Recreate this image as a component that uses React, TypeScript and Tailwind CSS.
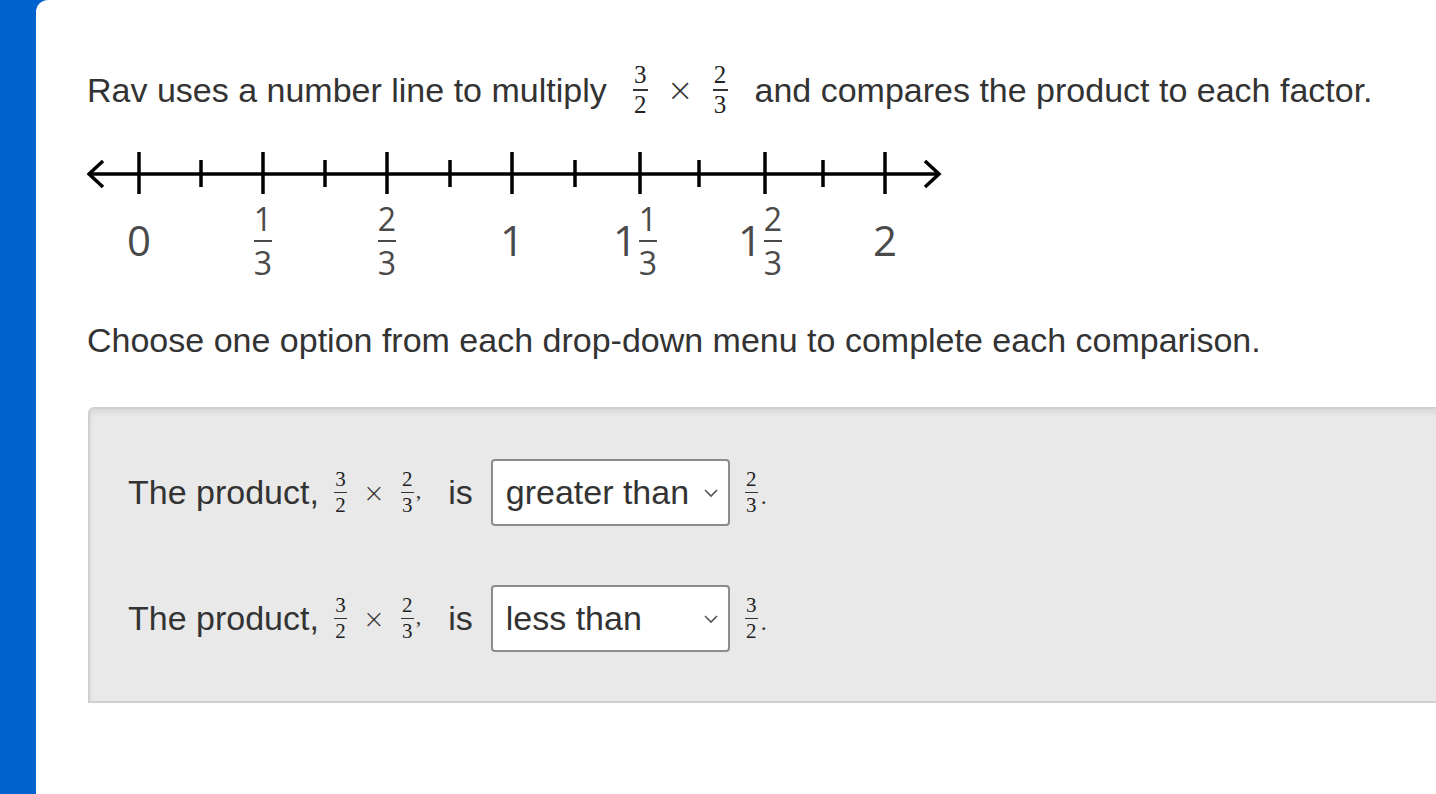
import React from 'react';

function Frac({ n, d, size = 'text-[25px]', bar = 'w-[15px]' }: { n: string; d: string; size?: string; bar?: string }) {
  return (
    <span className={`inline-flex flex-col items-center align-middle leading-none font-['Liberation_Serif',serif] text-[#222] ${size}`}>
      <span className="leading-[0.9]">{n}</span>
      <span className={`h-[1.5px] bg-[#333] my-[3px] ${bar}`} />
      <span className="leading-[0.9]">{d}</span>
    </span>
  );
}

function Times({ size = 'text-[32px]' }: { size?: string }) {
  return <span className={`font-['DejaVu_Sans',sans-serif] font-light text-[#333] ${size} leading-none`}>×</span>;
}

function Chevron() {
  return (
    <svg width="16" height="10" viewBox="0 0 16 10" fill="none">
      <path d="M2 2 L8 8 L14 2" stroke="#555" strokeWidth="1.6" />
    </svg>
  );
}

function Dropdown({ value }: { value: string }) {
  return (
    <div className="w-[239px] h-[67px] bg-white border-2 border-[#8c8c8c] rounded-[4px] flex items-center justify-between pl-[13px] pr-[9px] text-[34px] text-[#333]">
      <span>{value}</span>
      <Chevron />
    </div>
  );
}

function NumberLine() {
  const major = [52, 176, 300, 425, 553, 678, 798];
  const minor = [114, 238, 363, 488, 612, 736];
  const label = "font-['Open_Sans',sans-serif]";
  return (
    <svg width="860" height="140" viewBox="0 0 860 140" className="block">
      <line x1="2" y1="29" x2="852" y2="29" stroke="#000" strokeWidth="3.5" />
      <path d="M16 16 L2 29 L16 42" stroke="#000" strokeWidth="3.5" fill="none" />
      <path d="M838 16 L852 29 L838 42" stroke="#000" strokeWidth="3.5" fill="none" />
      {major.map((x) => (
        <line key={x} x1={x} y1="7" x2={x} y2="49" stroke="#000" strokeWidth="3.5" />
      ))}
      {minor.map((x) => (
        <line key={x} x1={x} y1="15" x2={x} y2="42" stroke="#000" strokeWidth="3.5" />
      ))}
      <g className={label} fill="#4a4a4a">
        <text x="52" y="111" fontSize="42" textAnchor="middle">0</text>
        <text x="425" y="111" fontSize="42" textAnchor="middle">1</text>
        <text x="798" y="111" fontSize="42" textAnchor="middle">2</text>
        {/* 1/3 */}
        <text x="176" y="86" fontSize="32" textAnchor="middle">1</text>
        <line x1="167" y1="96" x2="185" y2="96" stroke="#4a4a4a" strokeWidth="2" />
        <text x="176" y="130" fontSize="32" textAnchor="middle">3</text>
        {/* 2/3 */}
        <text x="300" y="86" fontSize="32" textAnchor="middle">2</text>
        <line x1="291" y1="96" x2="309" y2="96" stroke="#4a4a4a" strokeWidth="2" />
        <text x="300" y="130" fontSize="32" textAnchor="middle">3</text>
        {/* 1 1/3 */}
        <text x="538" y="111" fontSize="42" textAnchor="middle">1</text>
        <text x="561" y="86" fontSize="32" textAnchor="middle">1</text>
        <line x1="552" y1="96" x2="570" y2="96" stroke="#4a4a4a" strokeWidth="2" />
        <text x="561" y="130" fontSize="32" textAnchor="middle">3</text>
        {/* 1 2/3 */}
        <text x="663" y="111" fontSize="42" textAnchor="middle">1</text>
        <text x="686" y="86" fontSize="32" textAnchor="middle">2</text>
        <line x1="677" y1="96" x2="695" y2="96" stroke="#4a4a4a" strokeWidth="2" />
        <text x="686" y="130" fontSize="32" textAnchor="middle">3</text>
      </g>
    </svg>
  );
}

function Row({ value, n, d }: { value: string; n: string; d: string }) {
  return (
    <div className="flex items-center text-[34px] text-[#333]">
      <span>The product,</span>
      <span className="ml-[15px] inline-flex items-center gap-[16px]">
        <Frac n="3" d="2" size="text-[21px]" bar="w-[13px]" />
        <Times size="text-[26px]" />
        <span className="inline-flex items-center">
          <Frac n="2" d="3" size="text-[21px]" bar="w-[13px]" />
          <span className="font-['Liberation_Serif',serif] text-[22px] self-end mb-[8px] ml-[2px]">,</span>
        </span>
      </span>
      <span className="ml-[27px]">is</span>
      <div className="ml-[18px]">
        <Dropdown value={value} />
      </div>
      <span className="ml-[15px] inline-flex items-center">
        <Frac n={n} d={d} size="text-[21px]" bar="w-[13px]" />
        <span className="font-['Liberation_Serif',serif] text-[24px] ml-[3px] mt-[6px]">.</span>
      </span>
    </div>
  );
}

export default function App() {
  return (
    <div className="w-[1436px] h-[794px] overflow-hidden bg-[#0062cc] flex font-['Liberation_Sans',Arial,sans-serif]">
      <div className="ml-[36px] flex-1 bg-white rounded-tl-[12px] pl-[51px] pt-[68px] overflow-hidden">
        <p className="text-[34px] text-[#333] flex items-center h-[44px] whitespace-nowrap">
          <span>Rav uses a number line to multiply</span>
          <span className="ml-[26px] inline-flex items-center gap-[19px]">
            <Frac n="3" d="2" />
            <Times />
            <Frac n="2" d="3" />
          </span>
          <span className="ml-[27px]">and compares the product to each factor.</span>
        </p>

        <div className="mt-[33px]">
          <NumberLine />
        </div>

        <p className="mt-[30px] text-[34px] text-[#333] whitespace-nowrap">
          Choose one option from each drop-down menu to complete each comparison.
        </p>

        <div className="mt-[41px] ml-[1px] w-[1400px] h-[296px] bg-[#e9e9e9] border-2 border-[#d0d0d0] rounded-tl-[6px] shadow-[inset_0_4px_5px_rgba(0,0,0,0.07)] pl-[38px] pt-[50px] flex flex-col gap-[59px]">
          <Row value="greater than" n="2" d="3" />
          <Row value="less than" n="3" d="2" />
        </div>
      </div>
    </div>
  );
}
